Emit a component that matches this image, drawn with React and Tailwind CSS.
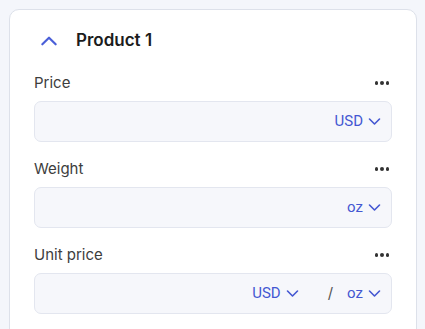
import React from 'react';

const Chevron = ({ up, className }) => (
  <svg viewBox="0 0 24 24" className={className} fill="none" stroke="currentColor" strokeWidth="2.6" strokeLinecap="round" strokeLinejoin="round">
    <path d={up ? 'M4 16l8-8 8 8' : 'M4 8l8 8 8-8'} />
  </svg>
);

const Dots = () => (
  <div className="flex items-center gap-[2px]">
    <span className="w-[3.5px] h-[3.5px] rounded-full bg-[#333]" />
    <span className="w-[3.5px] h-[3.5px] rounded-full bg-[#333]" />
    <span className="w-[3.5px] h-[3.5px] rounded-full bg-[#333]" />
  </div>
);

const Unit = ({ label }) => (
  <div className="flex items-center gap-[4px] text-[#4457d2] text-[15px] font-normal" style={{ fontFamily: 'Roboto, sans-serif' }}>
    <span>{label}</span>
    <Chevron className="w-[15px] h-[15px]" />
  </div>
);

function Field({ label, children }) {
  return (
    <div className="mb-[16px]">
      <div className="flex items-center justify-between h-[22px] mb-[7px]">
        <span className="text-[15px] text-[#3d3d3d]">{label}</span>
        <div className="pr-[3px]"><Dots /></div>
      </div>
      <div className="h-[41px] rounded-[7px] border border-[#e3e6ef] bg-[#f6f7fb] flex items-center justify-end pr-[9px]">
        {children}
      </div>
    </div>
  );
}

export default function App() {
  return (
    <div className="bg-[#f4f6fb] pt-[9px] pl-[9px] pr-[8px] overflow-hidden h-[329px]" style={{ fontFamily: 'Inter, "Noto Sans", sans-serif' }}>
      <div className="bg-white border border-[#dde1ea] rounded-[10px] px-[24px] pt-[18px] h-[340px]">
        <div className="flex items-center gap-[17px] pl-[5px] h-[26px] mb-[18px]">
          <Chevron up className="w-[20px] h-[20px] text-[#4a5fd8]" />
          <h1 className="text-[17px] font-semibold text-[#1c1c1c]">Product 1</h1>
        </div>
        <Field label="Price">
          <Unit label="USD" />
        </Field>
        <Field label="Weight">
          <Unit label="oz" />
        </Field>
        <Field label="Unit price">
          <Unit label="USD" />
          <span className="ml-[28px] mr-[14px] text-[#555] text-[15px]">/</span>
          <Unit label="oz" />
        </Field>
      </div>
    </div>
  );
}
